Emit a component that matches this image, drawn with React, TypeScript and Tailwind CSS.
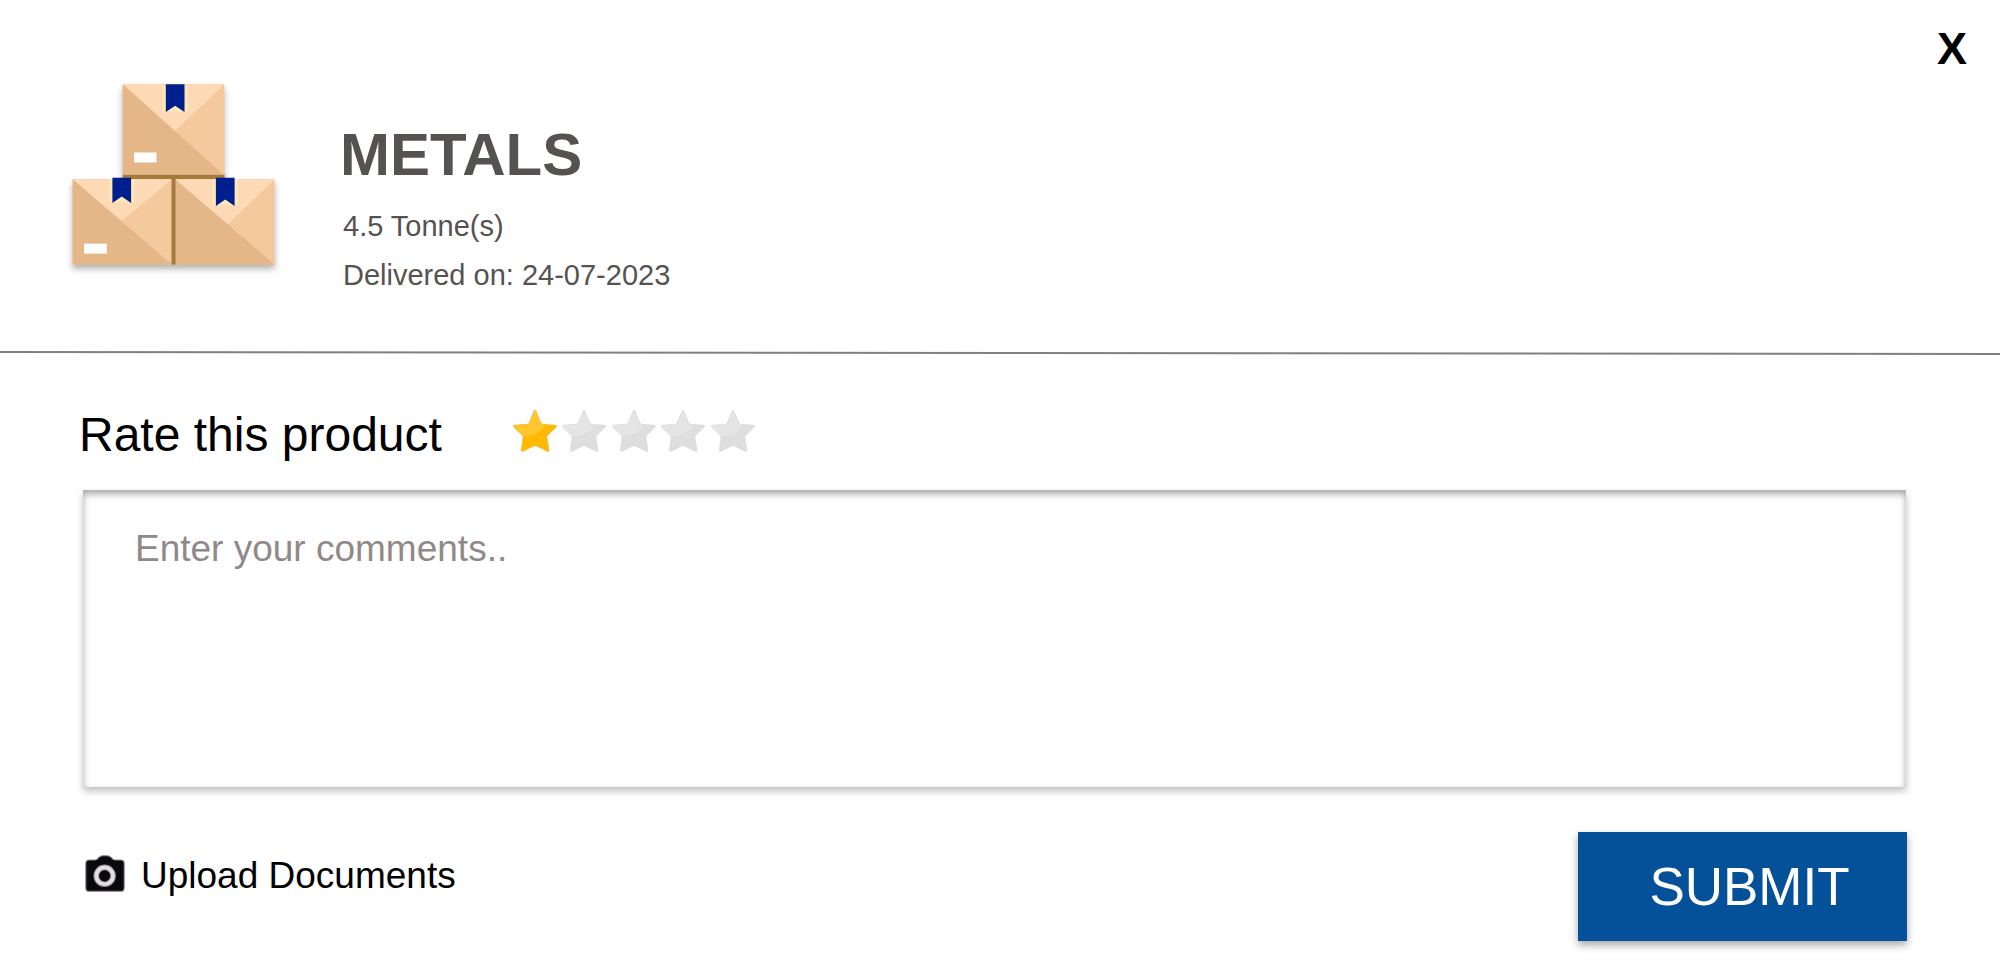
import { useState } from "react";

function Ribbon({ x, y, h }: { x: number; y: number; h: number }) {
  return (
    <g>
      <rect x={x - 10} y={y + 4} width="76" height={h - 6} fill="#fee8b8" />
      <path d={`M${x} ${y}h56v${h}l-28 -19l-28 19z`} fill="#001f8e" />
    </g>
  );
}

function Boxes() {
  return (
    <svg
      viewBox="30 35 620 560"
      className="h-[187px] w-[207px] shrink-0 overflow-visible drop-shadow-[0_4px_3px_rgba(0,0,0,0.3)]"
      aria-hidden="true"
    >
      <rect x="188" y="42" width="304" height="272" fill="#f4c99e" />
      <path d="M188 42H492L344 182Z" fill="#fed9b5" />
      <path d="M188 42L492 314H188Z" fill="#e4b688" />
      <Ribbon x={317} y={42} h={83} />
      <rect x="222" y="246" width="67" height="30" fill="#fff" />
      <rect x="188" y="313" width="305" height="13" fill="#a37b3d" />

      <rect x="38" y="326" width="298" height="256" fill="#f4c99e" />
      <path d="M38 326H336L182 454Z" fill="#fed9b5" />
      <path d="M38 326L336 582H38Z" fill="#e4b688" />
      <Ribbon x={157} y={322} h={75} />
      <rect x="72" y="519" width="68" height="30" fill="#fff" />

      <rect x="345" y="326" width="298" height="256" fill="#f4c99e" />
      <path d="M345 326H643L502 463Z" fill="#fed9b5" />
      <path d="M345 326L643 582H345Z" fill="#e4b688" />
      <Ribbon x={467} y={322} h={84} />
      <rect x="334" y="318" width="12" height="264" fill="#a37b3d" />
    </svg>
  );
}

const STAR =
  "M65 1Q67 1 68 4L82 38Q84 42 89 43L128 46Q132 48 129 51L103 76Q100 79 101 84L107 122Q107 126 102 124L69 108Q65 106 61 108L29 124Q24 126 24 122L29 84Q30 79 27 76L1 51Q-1 47 3 46L41 43Q46 42 48 38L62 4Q63 1 65 1Z";

function Star({ value, active }: { value: number; active: boolean }) {
  const clip = `star-${value}`;
  return (
    <svg viewBox="0 0 130 126" className="block h-[42px] w-[44px]" aria-hidden="true">
      <clipPath id={clip}>
        <path d={STAR} />
      </clipPath>
      <g clipPath={`url(#${clip})`}>
        <rect width="130" height="126" fill={active ? "#ffb900" : "#dedede"} />
        <circle cx="36" cy="5" r="73" fill={active ? "#ffc62e" : "#e5e5e5"} />
      </g>
      <path d={STAR} fill="none" stroke={active ? "#f5b525" : "#d8d8d8"} strokeWidth="2" />
    </svg>
  );
}

function Camera() {
  return (
    <svg viewBox="0 0 118 110" className="h-[37px] w-[40px] shrink-0" aria-hidden="true">
      <path
        d="M12 15H30Q36 14 41 7Q46 2 52 2H66Q72 2 77 7Q82 14 88 15H106Q116 15 116 25V98Q116 108 106 108H12Q2 108 2 98V25Q2 15 12 15Z"
        fill="#09080a"
        stroke="#8a888b"
        strokeWidth="3"
      />
      <circle cx="58" cy="62" r="25" fill="#09080a" stroke="#908c90" strokeWidth="17" />
      <circle cx="58" cy="62" r="25" fill="none" stroke="#e2dfe2" strokeWidth="11" />
    </svg>
  );
}

export default function App() {
  const [rating, setRating] = useState(1);

  return (
    <main className="min-h-screen bg-white font-['Liberation_Sans',Arial,sans-serif] text-black">
      <header className="relative flex items-start gap-16 pt-[82px] pr-24 pb-[51px] pl-[70px]">
        <Boxes />
        <div className="pt-[37px] text-[#575252]">
          <h1 className="mb-[11px] -ml-px text-[60px] leading-[72px] font-bold">METALS</h1>
          <div className="pl-[2px] text-[29px] leading-[49px]">
            <p>4.5 Tonne(s)</p>
            <p>Delivered on: 24-07-2023</p>
          </div>
        </div>
        <button
          type="button"
          aria-label="Close"
          className="absolute top-6 right-[33px] cursor-pointer text-[45px] leading-[50px] font-bold"
        >
          X
        </button>
      </header>
      <svg viewBox="0 0 2000 4" preserveAspectRatio="none" className="block h-1 w-full" aria-hidden="true">
        <path d="M0 1L2000 3" stroke="#808080" strokeWidth="2" />
      </svg>

      <form className="pr-[94px] pl-[83px]" onSubmit={(e) => e.preventDefault()}>
        <div role="radiogroup" aria-labelledby="rating-title" className="flex items-center pt-[52px]">
          <h2 id="rating-title" className="-ml-1 text-[48px] leading-[56px]">
            Rate this product
          </h2>
          <div className="ml-[71px] flex w-[242px] justify-between pb-2">
            {[1, 2, 3, 4, 5].map((n) => (
              <label key={n} className="relative cursor-pointer">
                <input
                  type="radio"
                  name="rating"
                  value={n}
                  checked={rating === n}
                  onChange={() => setRating(n)}
                  aria-label={`${n} star`}
                  className="absolute inset-0 cursor-pointer appearance-none"
                />
                <Star value={n} active={n <= rating} />
              </label>
            ))}
          </div>
        </div>

        <textarea
          aria-label="Comments"
          placeholder="Enter your comments.."
          className="mt-[27px] block h-[297px] w-full resize-none bg-white px-[52px] pt-[37px] text-[37px] leading-[44px] shadow-[inset_0_4px_7px_rgba(0,0,0,0.35),0_4px_7px_rgba(0,0,0,0.25)] outline-none placeholder:text-[#918989]"
        />

        <div className="mt-[45px] flex items-start justify-between">
          <button type="button" className="mt-4 ml-[2px] flex cursor-pointer items-center gap-4 text-[37px] leading-[44px]">
            <Camera />
            <span className="pt-[6px]">Upload Documents</span>
          </button>
          <button
            type="submit"
            className="-mr-px h-[109px] w-[329px] cursor-pointer bg-[#045199] pl-[14px] text-[53px] text-white shadow-[0_4px_8px_rgba(0,0,0,0.35)]"
          >
            SUBMIT
          </button>
        </div>
      </form>
    </main>
  );
}
